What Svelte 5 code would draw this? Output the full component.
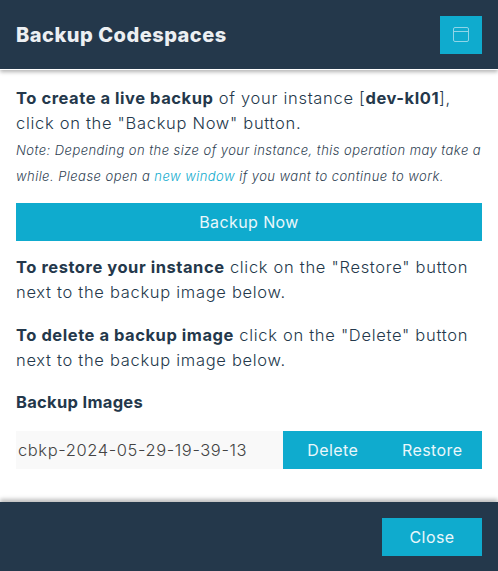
<script>
	const imageName = 'cbkp-2024-05-29-19-39-13';
</script>

<div class="modal">
	<header class="head">
		<h1>Backup Codespaces</h1>
		<button class="icon-btn" aria-label="Open in new window">
			<svg width="16" height="15" viewBox="0 0 16 15" fill="none" stroke="#8fd5e8" stroke-width="1">
				<rect x="0.5" y="0.5" width="15" height="14" rx="1.5" />
				<path d="M0.5 4.5h15" />
			</svg>
		</button>
	</header>

	<main class="body">
		<p class="lead"><b>To create a live backup</b> of your instance [<b>dev-kl01</b>], click on the "Backup Now" button.</p>
		<p class="note">Note: Depending on the size of your instance, this operation may take a while. Please open a <a href="#new">new window</a> if you want to continue to work.</p>

		<button class="btn wide">Backup Now</button>

		<p class="para"><b>To restore your instance</b> click on the "Restore" button next to the backup image below.</p>
		<p class="para"><b>To delete a backup image</b> click on the "Delete" button next to the backup image below.</p>

		<h2>Backup Images</h2>
		<div class="image-row">
			<span class="image-name">{imageName}</span>
			<div class="image-actions">
				<button class="btn action">Delete</button>
				<button class="btn action">Restore</button>
			</div>
		</div>
	</main>

	<footer class="foot">
		<button class="btn close">Close</button>
	</footer>
</div>

<style>
	:global(body) {
		background: #fff;
	}

	.modal {
		width: 498px;
		height: 571px;
		display: flex;
		flex-direction: column;
		overflow: hidden;
		font-family: "Inter", "Open Sans", sans-serif;
		color: #24384b;
	}

	.head {
		height: 69px;
		flex: none;
		display: flex;
		align-items: center;
		justify-content: space-between;
		padding: 0 16px;
		box-sizing: border-box;
		background: #24384b;
		box-shadow: 0 1px 0 #fff, 0 3px 4px rgba(0, 0, 0, 0.3);
		position: relative;
	}

	h1 {
		margin: 0;
		font-size: 20px;
		font-weight: 800;
		letter-spacing: 0.5px;
		color: #eceff2;
	}

	.icon-btn {
		width: 42px;
		height: 38px;
		padding: 0;
		border: 0;
		background: #0fabce;
		display: flex;
		align-items: center;
		justify-content: center;
	}

	.body {
		flex: 1;
		padding: 17px 16px 0;
	}

	p {
		margin: 0;
	}

	b {
		font-weight: 700;
		letter-spacing: 0.55px;
	}

	.lead,
	.para {
		font-size: 16.5px;
		line-height: 25px;
		letter-spacing: 0.7px;
		font-weight: 300;
	}

	.note {
		margin-top: 1px;
		font-size: 13px;
		line-height: 26px;
		letter-spacing: 0.45px;
		font-weight: 300;
		font-style: italic;
		color: #2f4253;
	}

	.note a {
		color: #0fabce;
		text-decoration: none;
	}

	.btn {
		border: 0;
		padding: 0;
		background: #0fabce;
		color: #eaf7fb;
		font-family: inherit;
		font-size: 16px;
		letter-spacing: 0.4px;
	}

	.wide {
		display: block;
		width: 100%;
		height: 38px;
		margin: 14px 0 14px;
	}

	.para {
		margin-bottom: 18px;
	}

	h2 {
		margin: 12px 0 18px;
		font-size: 16.5px;
		line-height: 22px;
		font-weight: 700;
		letter-spacing: 0.3px;
	}

	.image-row {
		display: flex;
		height: 38px;
	}

	.image-name {
		flex: 1;
		background: #f9f9f9;
		padding-left: 2px;
		font-size: 16.5px;
		font-weight: 300;
		letter-spacing: 0.6px;
		line-height: 38px;
		color: #444;
	}

	.image-actions {
		width: 199px;
		display: flex;
		background: #0fabce;
	}

	.action {
		flex: 1;
	}

	.foot {
		height: 69px;
		flex: none;
		display: flex;
		align-items: center;
		justify-content: flex-end;
		padding: 0 16px;
		box-sizing: border-box;
		background: #24384b;
		box-shadow: 0 -3px 4px rgba(0, 0, 0, 0.25);
	}

	.close {
		width: 100px;
		height: 38px;
	}
</style>
